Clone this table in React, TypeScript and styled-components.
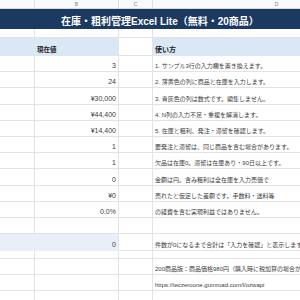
import styled, { createGlobalStyle } from "styled-components"

const GlobalStyle = createGlobalStyle`
  html, body {
    margin: 0;
    padding: 0;
    background: #ffffff;
  }
`

const COLS = "35px 84px 34px 248px"
const GRID = "#e3e3e3"
const HEAD_BLUE = "#dae8f5"
const SUM_BLUE = "#e8eff8"

interface RowProps {
  h: number
}

interface CellProps {
  fill?: string
  align?: "left" | "right"
  last?: boolean
}

const Sheet = styled.div`
  width: 300px;
  height: 300px;
  overflow: hidden;
  font-family: "Liberation Sans", "Noto Sans CJK JP", sans-serif;
  color: #333333;
`

const ColumnHeader = styled.div`
  display: grid;
  grid-template-columns: ${COLS};
  height: 9px;
  background: #f8f9fa;
  border-bottom: 1px solid #dadce0;
  box-sizing: border-box;
`

const ColumnLetter = styled.div`
  display: flex;
  align-items: center;
  justify-content: center;
  border-right: 1px solid #e0e0e0;
  font-size: 5px;
  color: #80868b;
  line-height: 1;
`

const TitleBar = styled.div`
  height: 20px;
  background: #1b3a62;
  display: flex;
  align-items: flex-end;
  padding: 0 0 2px 61px;
  box-sizing: border-box;
  color: #ffffff;
  font-size: 10px;
  font-weight: 700;
  line-height: 1;
  white-space: nowrap;
`

const Row = styled.div<RowProps>`
  display: grid;
  grid-template-columns: ${COLS};
  height: ${({ h }) => `${h}px`};
`

const Cell = styled.div<CellProps>`
  display: flex;
  align-items: flex-end;
  justify-content: ${({ align }) => (align === "right" ? "flex-end" : "flex-start")};
  box-sizing: border-box;
  padding: 0 2px 2px 2px;
  background: ${({ fill }) => fill ?? "#ffffff"};
  border-bottom: 1px solid ${({ fill }) => fill ?? GRID};
  border-right: 1px solid ${({ fill, last }) => (fill && !last ? fill : GRID)};
  line-height: 1;
  white-space: nowrap;
  min-width: 0;
`

const Num = styled.span`
  font-size: 7px;
  color: #3c3c3c;
`

const Note = styled.span`
  font-size: 6px;
  color: #3c3c3c;
`

const Heading = styled.span<{ size: number }>`
  font-size: ${({ size }) => `${size}px`};
  font-weight: 700;
  color: #222222;
`

const rows: [string, string][] = [
  ["3", "1. サンプル3行の入力欄を置き換えます。"],
  ["24", "2. 薄黄色の列に商品と在庫を入力します。"],
  ["¥30,000", "3. 青灰色の列は数式です。編集しません。"],
  ["¥44,400", "4. N列の入力不足・重複を解消します。"],
  ["¥14,400", "5. 在庫と粗利、発注・滞留を確認します。"],
  ["1", "要発注と滞留は、同じ商品を含む場合があります。"],
  ["1", "欠品は在庫0。滞留は在庫あり・90日以上です。"],
  ["0", "金額は円。含み粗利は全在庫を入力売価で"],
  ["¥0", "売れたと仮定した差額です。手数料・送料等"],
  ["0.0%", "の経費を含む実現利益ではありません。"],
]

export default function App() {
  return (
    <Sheet>
      <GlobalStyle />

      <ColumnHeader>
        <ColumnLetter />
        <ColumnLetter>B</ColumnLetter>
        <ColumnLetter>C</ColumnLetter>
        <ColumnLetter>D</ColumnLetter>
      </ColumnHeader>

      <TitleBar>在庫・粗利管理Excel Lite（無料・20商品）</TitleBar>

      <Row h={9}>
        <Cell />
        <Cell />
        <Cell />
        <Cell />
      </Row>

      <Row h={18}>
        <Cell fill={HEAD_BLUE} />
        <Cell fill={HEAD_BLUE} last>
          <Heading size={6.5}>現在値</Heading>
        </Cell>
        <Cell />
        <Cell fill={HEAD_BLUE}>
          <Heading size={7}>使い方</Heading>
        </Cell>
      </Row>

      {rows.map(([value, note], i) => (
        <Row h={16.2} key={i}>
          <Cell />
          <Cell align="right">
            <Num>{value}</Num>
          </Cell>
          <Cell />
          <Cell>
            <Note>{note}</Note>
          </Cell>
        </Row>
      ))}

      <Row h={16}>
        <Cell />
        <Cell />
        <Cell />
        <Cell />
      </Row>

      <Row h={17}>
        <Cell fill={SUM_BLUE} />
        <Cell fill={SUM_BLUE} align="right" last>
          <Num>0</Num>
        </Cell>
        <Cell />
        <Cell>
          <Note>件数が0になるまで合計は「入力を確認」と表示します。</Note>
        </Cell>
      </Row>

      <Row h={8}>
        <Cell />
        <Cell />
        <Cell />
        <Cell />
      </Row>

      <Row h={16}>
        <Cell />
        <Cell />
        <Cell />
        <Cell>
          <Note>200商品版：商品価格980円（購入時に税加算の場合があります）</Note>
        </Cell>
      </Row>

      <Row h={16}>
        <Cell />
        <Cell />
        <Cell />
        <Cell>
          <Note>https://teczeroone.gumroad.com/l/ozwapi</Note>
        </Cell>
      </Row>

      <Row h={16}>
        <Cell />
        <Cell />
        <Cell />
        <Cell />
      </Row>
    </Sheet>
  )
}
